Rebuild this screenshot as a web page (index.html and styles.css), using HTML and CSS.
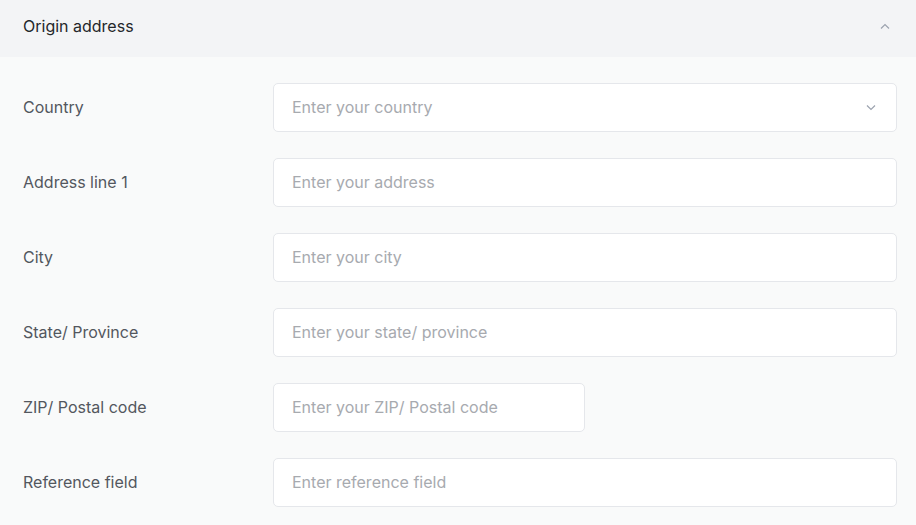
FILE: index.html
```html
<!DOCTYPE html>
<html lang="en">
<head>
    <meta charset="UTF-8">
    <meta name="viewport" content="width=device-width, initial-scale=1.0">
    <title>Origin address</title>
    <link rel="stylesheet" href="styles.css">
</head>
<body>
    <section class="panel">
        <div class="panel-header">
            <span class="panel-title">Origin address</span>
            <svg class="chevron" width="10" height="6" viewBox="0 0 10 6" fill="none">
                <path d="M1 5.5L5 1.5L9 5.5" stroke="#9ca3af" stroke-width="1.2"/>
            </svg>
        </div>
        <form class="panel-body">
            <div class="form-row">
                <label for="country" class="form-label">Country</label>
                <div class="select-wrap">
                    <input type="text" id="country" class="input" placeholder="Enter your country">
                    <svg class="select-arrow" width="10" height="6" viewBox="0 0 10 6" fill="none">
                        <path d="M1 0.5L5 4.5L9 0.5" stroke="#9ca3af" stroke-width="1.2"/>
                    </svg>
                </div>
            </div>
            <div class="form-row">
                <label for="address" class="form-label">Address line 1</label>
                <input type="text" id="address" class="input" placeholder="Enter your address">
            </div>
            <div class="form-row">
                <label for="city" class="form-label">City</label>
                <input type="text" id="city" class="input" placeholder="Enter your city">
            </div>
            <div class="form-row">
                <label for="state" class="form-label">State/ Province</label>
                <input type="text" id="state" class="input" placeholder="Enter your state/ province">
            </div>
            <div class="form-row">
                <label for="zip" class="form-label">ZIP/ Postal code</label>
                <input type="text" id="zip" class="input input-half" placeholder="Enter your ZIP/ Postal code">
            </div>
            <div class="form-row">
                <label for="reference" class="form-label">Reference field</label>
                <input type="text" id="reference" class="input" placeholder="Enter reference field">
            </div>
        </form>
    </section>
</body>
</html>
```

FILE: styles.css
```css
* {
    box-sizing: border-box;
    margin: 0;
    padding: 0;
}
body, html {
    height: 100%;
    font-family: 'Inter', 'Noto Sans', sans-serif;
    background-color: #f9fafa;
}
.panel-header {
    height: 57px;
    background-color: #f3f4f6;
    display: flex;
    align-items: center;
    justify-content: space-between;
    padding: 0 26px 6px 23px;
}
.panel-title {
    font-size: 16px;
    color: #24272b;
}
.chevron {
    display: block;
}
.panel-body {
    display: flex;
    flex-direction: column;
    gap: 26px;
    padding: 26px 19px 18px 23px;
}
.form-row {
    display: grid;
    grid-template-columns: 250px 1fr;
    align-items: center;
}
.form-label {
    font-size: 16px;
    color: #53575e;
    padding-bottom: 2px;
}
.input {
    width: 100%;
    height: 49px;
    background-color: #ffffff;
    border: 1px solid #e5e7eb;
    border-radius: 5px;
    padding: 0 18px 2px;
    font-family: inherit;
    font-size: 16px;
    color: #1f2328;
    outline: none;
}
.input::placeholder {
    color: #a7aaaf;
}
.input-half {
    width: 312px;
}
.select-wrap {
    position: relative;
}
.select-arrow {
    position: absolute;
    right: 21px;
    top: 22px;
    pointer-events: none;
}
```
